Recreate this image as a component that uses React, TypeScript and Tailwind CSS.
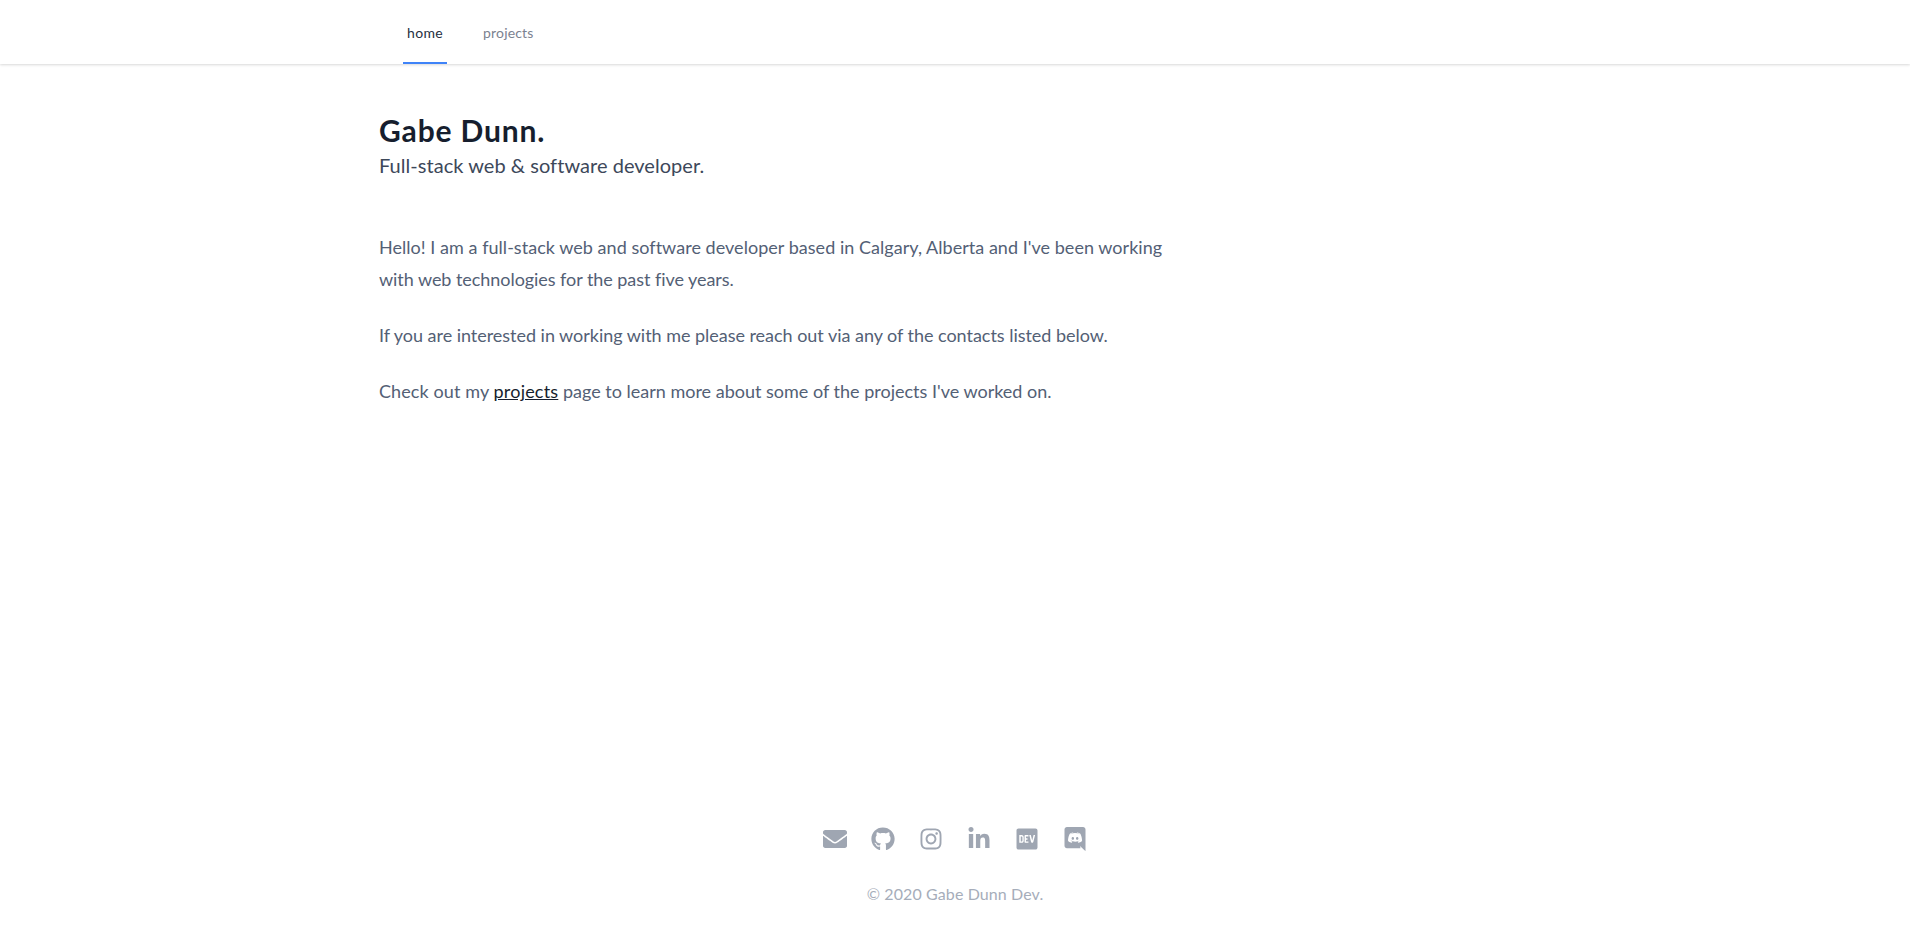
import type { SVGProps } from 'react'
import { FaDev, FaEnvelope, FaGithub, FaInstagram, FaLinkedinIn } from 'react-icons/fa'

function DiscordIcon(props: SVGProps<SVGSVGElement>) {
  return (
    <svg viewBox="0 0 448 512" fill="currentColor" {...props}>
      <path d="M297.216 243.2c0 15.616-11.52 28.416-26.112 28.416-14.336 0-26.112-12.8-26.112-28.416s11.52-28.416 26.112-28.416c14.592 0 26.112 12.8 26.112 28.416zm-119.552-28.416c-14.592 0-26.112 12.8-26.112 28.416s11.776 28.416 26.112 28.416c14.592 0 26.112-12.8 26.112-28.416.256-15.616-11.52-28.416-26.112-28.416zM448 52.736V512c-64.494-56.994-43.868-38.128-118.784-107.776l13.568 47.36H52.48C23.552 451.584 0 428.032 0 398.848V52.736C0 23.552 23.552 0 52.48 0h343.04C424.448 0 448 23.552 448 52.736zm-72.96 242.688c0-82.432-36.864-149.248-36.864-149.248-36.864-27.648-71.936-26.88-71.936-26.88l-3.584 4.096c43.52 13.312 63.744 32.512 63.744 32.512-60.811-33.329-132.244-33.335-191.232-7.424-9.472 4.352-15.104 7.424-15.104 7.424s21.248-20.224 67.328-33.536l-2.56-3.072s-35.072-.768-71.936 26.88c0 0-36.864 66.816-36.864 149.248 0 0 21.504 37.12 78.08 38.912 0 0 9.472-11.52 17.152-21.248-32.512-9.728-44.8-30.208-44.8-30.208 3.766 2.636 9.976 6.053 10.496 6.4 43.21 24.198 104.588 32.126 159.744 8.96 8.96-3.328 18.944-8.192 29.44-15.104 0 0-12.8 20.992-46.336 30.464 7.68 9.728 16.896 20.736 16.896 20.736 56.576-1.792 78.336-38.912 78.336-38.912z" />
    </svg>
  )
}

const contacts = [
  { label: 'Email', icon: FaEnvelope },
  { label: 'GitHub', icon: FaGithub },
  { label: 'Instagram', icon: FaInstagram },
  { label: 'LinkedIn', icon: FaLinkedinIn },
  { label: 'DEV', icon: FaDev },
  { label: 'Discord', icon: DiscordIcon },
]

function Header() {
  return (
    <header className="h-16 bg-white shadow-[0_1px_3px_rgba(0,0,0,0.1),0_1px_2px_rgba(0,0,0,0.06)]">
      <nav className="mx-auto flex h-full max-w-6xl gap-8 px-6 text-sm leading-5">
        <a
          href="#home"
          className="flex w-11 items-center justify-center border-b-2 border-[#3f83f8] pt-1 tracking-[0.3px] text-[#252f3f]"
        >
          home
        </a>
        <a
          href="#projects"
          className="flex items-center border-b-2 border-transparent px-1 pt-1 tracking-[0.18px] text-[#7b8290]"
        >
          projects
        </a>
      </nav>
    </header>
  )
}

function Footer() {
  return (
    <footer className="flex flex-col items-center text-[#9fa6b2]">
      <div className="flex gap-6">
        {contacts.map(({ label, icon: Icon }) => (
          <a key={label} href={`#${label.toLowerCase()}`} aria-label={label}>
            <Icon className="size-6" />
          </a>
        ))}
      </div>
      <p className="mt-[31px] mb-[33px] text-base leading-6 tracking-[0.1px] text-[#a6adba]">
        &copy; 2020 Gabe Dunn Dev.
      </p>
    </footer>
  )
}

export default function App() {
  return (
    <div className="flex h-screen flex-col bg-white font-[Lato,sans-serif]">
      <Header />
      <main className="mx-auto w-full max-w-6xl grow pt-12">
        <h1 className="text-3xl leading-9 font-bold tracking-[0.85px] text-[#161e2e]">Gabe Dunn.</h1>
        <p className="text-xl leading-[34px] tracking-[0.04px] text-[#3d485a]">
          Full-stack web &amp; software developer.
        </p>
        <div className="mt-[49px] flex max-w-[800px] flex-col gap-6 text-lg leading-8 text-[#536075]">
          <p>
            <span className="tracking-[0.035px]">
              Hello! I am a full-stack web and software developer based in Calgary, Alberta and I've
              been working
            </span>{' '}
            <span className="tracking-[-0.05px]">with web technologies for the past five years.</span>
          </p>
          <p className="tracking-[-0.03px]">
            If you are interested in working with me please reach out via any of the contacts listed
            below.
          </p>
          <p>
            <span className="tracking-[0.1px]">Check out my </span>
            <a href="#projects" className="tracking-[0.2px] text-[#161e2e] underline">
              projects
            </a>{' '}
            page to learn more about some of the projects I've worked on.
          </p>
        </div>
      </main>
      <Footer />
    </div>
  )
}
